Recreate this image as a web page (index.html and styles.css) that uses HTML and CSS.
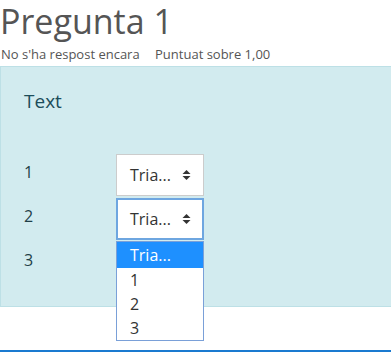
FILE: index.html
```html
<!DOCTYPE html>
<html lang="ca">
<head>
    <meta charset="UTF-8">
    <meta name="viewport" content="width=device-width, initial-scale=1.0">
    <title>Pregunta 1</title>
    <link rel="stylesheet" href="styles.css">
</head>
<body>
    <div class="question">
        <h2 class="qno">Pregunta 1</h2>
        <div class="state">
            <span>No s'ha respost encara</span>
            <span>Puntuat sobre 1,00</span>
        </div>
        <div class="formulation">
            <p class="qtext">Text</p>
            <div class="answers">
                <div class="row">
                    <span class="lbl">1</span>
                    <div class="select">
                        <span>Tria...</span>
                        <svg class="arrow" width="9" height="12" viewBox="0 0 9 12"><path d="M4.5 1 L8.5 5 H0.5 Z M4.5 11 L8.5 7 H0.5 Z" fill="#333"/></svg>
                    </div>
                </div>
                <div class="row">
                    <span class="lbl">2</span>
                    <div class="select focus">
                        <span>Tria...</span>
                        <svg class="arrow" width="9" height="12" viewBox="0 0 9 12"><path d="M4.5 1 L8.5 5 H0.5 Z M4.5 11 L8.5 7 H0.5 Z" fill="#333"/></svg>
                        <ul class="dropdown">
                            <li class="active">Tria...</li>
                            <li>1</li>
                            <li>2</li>
                            <li>3</li>
                        </ul>
                    </div>
                </div>
                <div class="row">
                    <span class="lbl">3</span>
                </div>
            </div>
        </div>
    </div>
    <div class="bottom-line"></div>
</body>
</html>
```

FILE: styles.css
```css
body {
    margin: 0;
    font-family: "Open Sans", "Noto Sans", sans-serif;
    color: #555;
    background: white;
    width: 391px;
    height: 353px;
    overflow: hidden;
    position: relative;
}
.qno {
    margin: 0;
    font-size: 34px;
    font-weight: 400;
    line-height: 42px;
    color: #555;
}
.state {
    font-size: 13px;
    line-height: 24px;
    color: #555;
    padding-left: 1px;
}
.state span {
    margin-right: 12px;
}
.formulation {
    background-color: #d2ebef;
    border: 1px solid #bde0e6;
    border-right: none;
    height: 239px;
    padding: 0 23px;
    color: #1c4d5a;
}
.qtext {
    margin: 18px 0 0 0;
    font-size: 19px;
    line-height: 32px;
}
.answers {
    margin-top: 36px;
}
.row {
    display: flex;
    align-items: center;
    height: 44px;
}
.lbl {
    width: 92px;
    font-size: 16px;
    margin-top: -6px;
    color: #1f3f48;
}
.select {
    position: relative;
    box-sizing: border-box;
    width: 88px;
    height: 42px;
    background: white;
    border: 1px solid #ccc;
    display: flex;
    align-items: center;
    padding-left: 13px;
    font-size: 16px;
    color: #333;
}
.select .arrow {
    margin-left: auto;
    margin-right: 12px;
}
.select.focus {
    border: 2px solid #6ea6e0;
    padding-left: 12px;
}
.select.focus .arrow {
    margin-right: 11px;
}
.dropdown {
    position: absolute;
    left: -2px;
    top: 41px;
    width: 88px;
    box-sizing: border-box;
    margin: 0;
    padding: 0;
    list-style: none;
    background: white;
    border: 1px solid #7aa0d8;
    font-size: 16px;
    color: #333;
    z-index: 2;
}
.dropdown li {
    height: 24px;
    line-height: 24px;
    padding-left: 13px;
}
.dropdown li.active {
    background: #1e90ff;
    color: white;
    height: 26px;
    line-height: 26px;
}
.bottom-line {
    position: absolute;
    left: 0;
    right: 0;
    top: 350px;
    height: 2px;
    background: #1a7ad0;
}
```
